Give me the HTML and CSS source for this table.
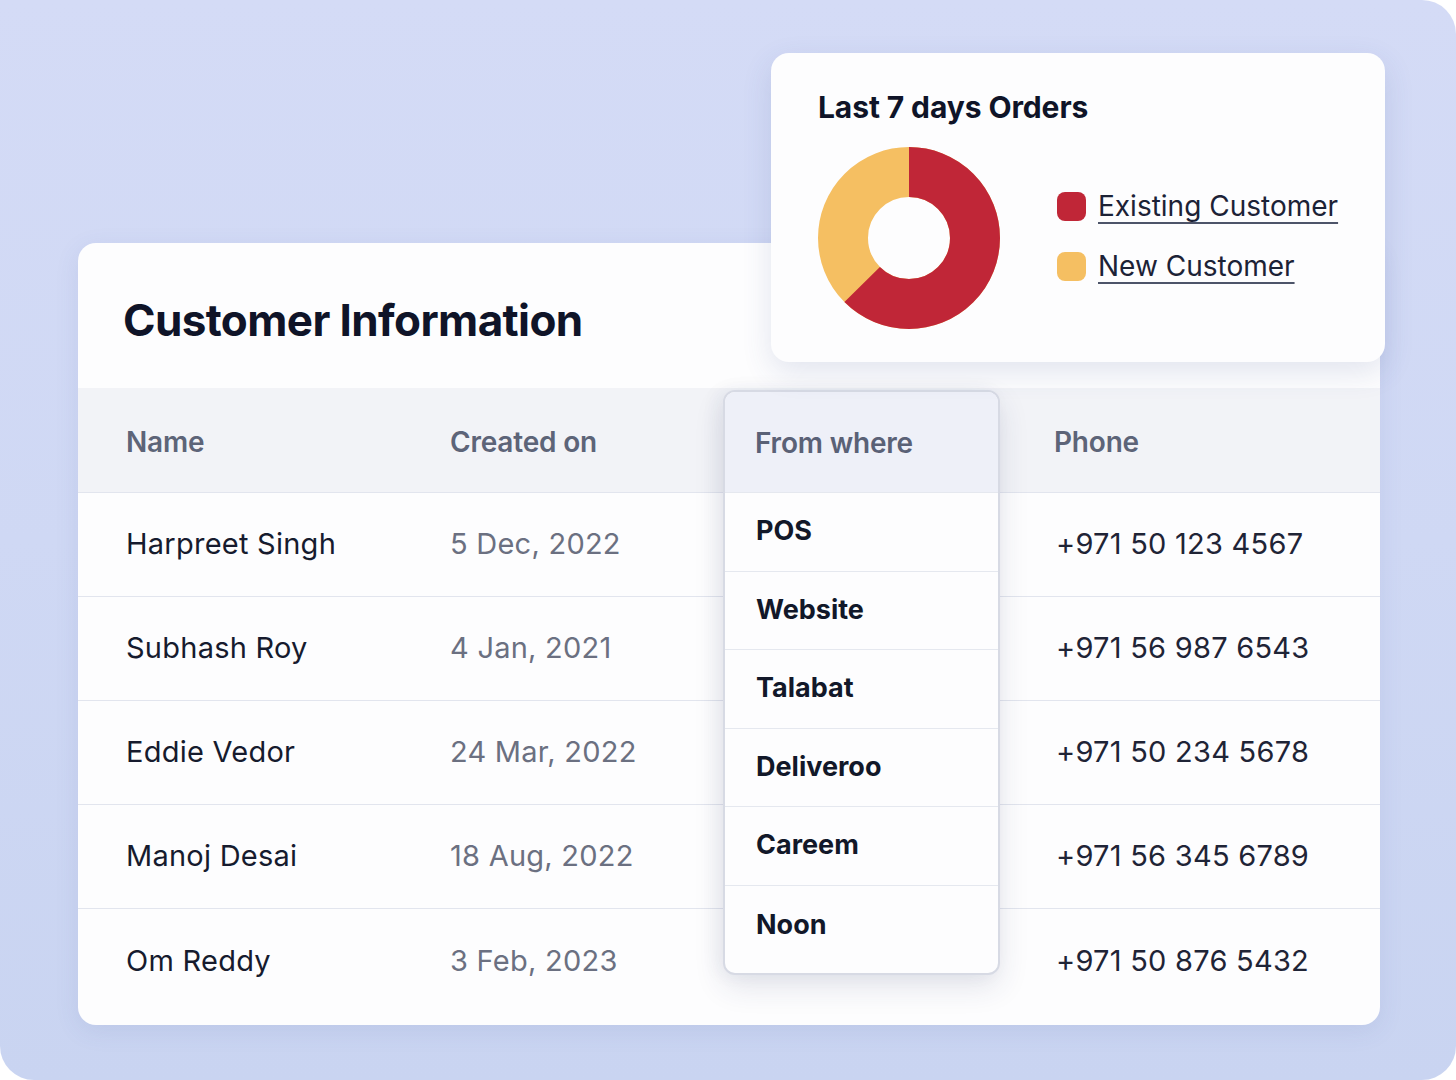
FILE: index.html
```html
<!DOCTYPE html>
<html lang="en">
<head>
<meta charset="utf-8">
<title>Customer Information</title>
<link rel="stylesheet" href="styles.css">
</head>
<body>
<div class="frame">
  <section class="table-card">
    <h1 class="card-title">Customer Information</h1>
    <div class="table">
      <div class="row head">
        <div class="cell">Name</div>
        <div class="cell">Created on</div>
        <div class="cell"></div>
        <div class="cell phone">Phone</div>
      </div>
      <div class="row">
        <div class="cell name">Harpreet Singh</div>
        <div class="cell date">5 Dec, 2022</div>
        <div class="cell"></div>
        <div class="cell phone">+971 50 123 4567</div>
      </div>
      <div class="row">
        <div class="cell name">Subhash Roy</div>
        <div class="cell date">4 Jan, 2021</div>
        <div class="cell"></div>
        <div class="cell phone">+971 56 987 6543</div>
      </div>
      <div class="row">
        <div class="cell name">Eddie Vedor</div>
        <div class="cell date">24 Mar, 2022</div>
        <div class="cell"></div>
        <div class="cell phone">+971 50 234 5678</div>
      </div>
      <div class="row">
        <div class="cell name">Manoj Desai</div>
        <div class="cell date">18 Aug, 2022</div>
        <div class="cell"></div>
        <div class="cell phone">+971 56 345 6789</div>
      </div>
      <div class="row last">
        <div class="cell name">Om Reddy</div>
        <div class="cell date">3 Feb, 2023</div>
        <div class="cell"></div>
        <div class="cell phone">+971 50 876 5432</div>
      </div>
    </div>

    <div class="dropdown">
      <div class="dd-head">From where</div>
      <div class="dd-item">POS</div>
      <div class="dd-item">Website</div>
      <div class="dd-item">Talabat</div>
      <div class="dd-item">Deliveroo</div>
      <div class="dd-item">Careem</div>
      <div class="dd-item dd-last">Noon</div>
    </div>
  </section>

  <section class="chart-card">
    <h2 class="chart-title">Last 7 days Orders</h2>
    <div class="chart-body">
      <svg class="donut" width="182" height="182" viewBox="0 0 182 182">
        <circle cx="91" cy="91" r="66" fill="none" stroke="#f5bf62" stroke-width="50"/>
        <circle cx="91" cy="91" r="66" fill="none" stroke="#c02637" stroke-width="50"
          stroke-dasharray="259 414.7" transform="rotate(-90 91 91)"/>
      </svg>
      <ul class="legend">
        <li class="legend-item"><span class="swatch red"></span><span class="legend-label">Existing Customer</span></li>
        <li class="legend-item"><span class="swatch yellow"></span><span class="legend-label">New Customer</span></li>
      </ul>
    </div>
  </section>
</div>
</body>
</html>
```

FILE: styles.css
```css
* { box-sizing: border-box; }

html, body {
  margin: 0;
  padding: 0;
  background: #ffffff;
}

body {
  font-family: Inter, "Noto Sans", "Liberation Sans", sans-serif;
  color: #161b2e;
}

.frame {
  position: relative;
  width: 1456px;
  height: 1080px;
  overflow: hidden;
  border-radius: 0 34px 34px 34px;
  background: linear-gradient(180deg, #d4dbf6 0%, #cfd8f4 50%, #c9d4f1 100%);
  padding: 243px 0 0 78px;
}

/* ---------- table card ---------- */
.table-card {
  position: relative;
  width: 1302px;
  height: 782px;
  background: #fdfdfe;
  border-radius: 18px;
  box-shadow: 0 6px 24px rgba(70, 90, 160, 0.10);
}

.card-title {
  margin: 0;
  height: 145px;
  padding: 50px 0 0 45px;
  font-size: 44px;
  font-weight: 700;
  letter-spacing: -0.6px;
  color: #0f1428;
  line-height: 54px;
}

.table {
  display: flex;
  flex-direction: column;
}

.row {
  display: grid;
  grid-template-columns: 324px 273px 276px 1fr;
  align-items: center;
  height: 104px;
  padding-left: 48px;
  padding-bottom: 2px;
  border-top: 1.5px solid #e2e5ee;
  font-size: 29px;
  letter-spacing: 0.25px;
}

.row.head {
  height: 104px;
  padding-bottom: 0;
  padding-top: 3px;
  border-top: none;
  background: #f2f3f7;
  font-size: 28px;
  font-weight: 600;
  color: #5d6478;
  letter-spacing: -0.2px;
}

.row.last {
  height: 115px;
  padding-bottom: 12px;
}

.cell.name {
  color: #161b2e;
}

.cell.date {
  color: #6b7081;
}

.cell.phone {
  padding-left: 57px;
  color: #1f2436;
}

.row.head .cell.phone {
  padding-left: 55px;
  color: #5d6478;
}

/* ---------- dropdown ---------- */
.dropdown {
  position: absolute;
  left: 645px;
  top: 147px;
  width: 277px;
  border: 2px solid #d7dae4;
  border-radius: 12px;
  background: #fdfdfe;
  overflow: hidden;
  box-shadow: 0 12px 30px rgba(40, 50, 100, 0.12), -6px 0 18px rgba(40, 50, 100, 0.05);
}

.dd-head {
  height: 100px;
  display: flex;
  align-items: center;
  padding-left: 30px;
  padding-top: 2px;
  background: #eef0f8;
  font-size: 28px;
  font-weight: 600;
  color: #5a6176;
  letter-spacing: -0.2px;
}

.dd-item {
  height: 78.5px;
  display: flex;
  align-items: center;
  padding-left: 31px;
  padding-bottom: 2px;
  font-size: 27px;
  font-weight: 700;
  color: #121829;
  border-top: 1.5px solid #e5e8ef;
  letter-spacing: 0px;
}

.dd-item.dd-last {
  height: 88px;
  padding-bottom: 10px;
}

/* ---------- chart card ---------- */
.chart-card {
  position: absolute;
  left: 771px;
  top: 53px;
  width: 614px;
  height: 309px;
  background: #fdfdfe;
  border-radius: 18px;
  padding: 35px 0 0 47px;
  box-shadow: 0 10px 30px rgba(60, 75, 140, 0.14);
}

.chart-title {
  margin: 0;
  font-size: 30px;
  font-weight: 700;
  line-height: 38px;
  letter-spacing: -0.1px;
  color: #0f1428;
}

.chart-body {
  display: flex;
  align-items: flex-start;
  margin-top: 21px;
  gap: 57px;
}

.donut {
  display: block;
  flex: none;
}

.legend {
  list-style: none;
  margin: 41px 0 0 0;
  padding: 0;
  display: flex;
  flex-direction: column;
  gap: 24px;
}

.legend-item {
  display: flex;
  align-items: center;
  gap: 12px;
  height: 36px;
}

.swatch {
  width: 29px;
  height: 29px;
  border-radius: 8px;
  flex: none;
}

.swatch.red { background: #c02637; }
.swatch.yellow { background: #f5bf62; }

.legend-label {
  font-size: 28px;
  color: #1c2236;
  text-decoration: underline;
  text-decoration-color: #4d5469;
  text-decoration-thickness: 2px;
  text-underline-offset: 6px;
}
```
